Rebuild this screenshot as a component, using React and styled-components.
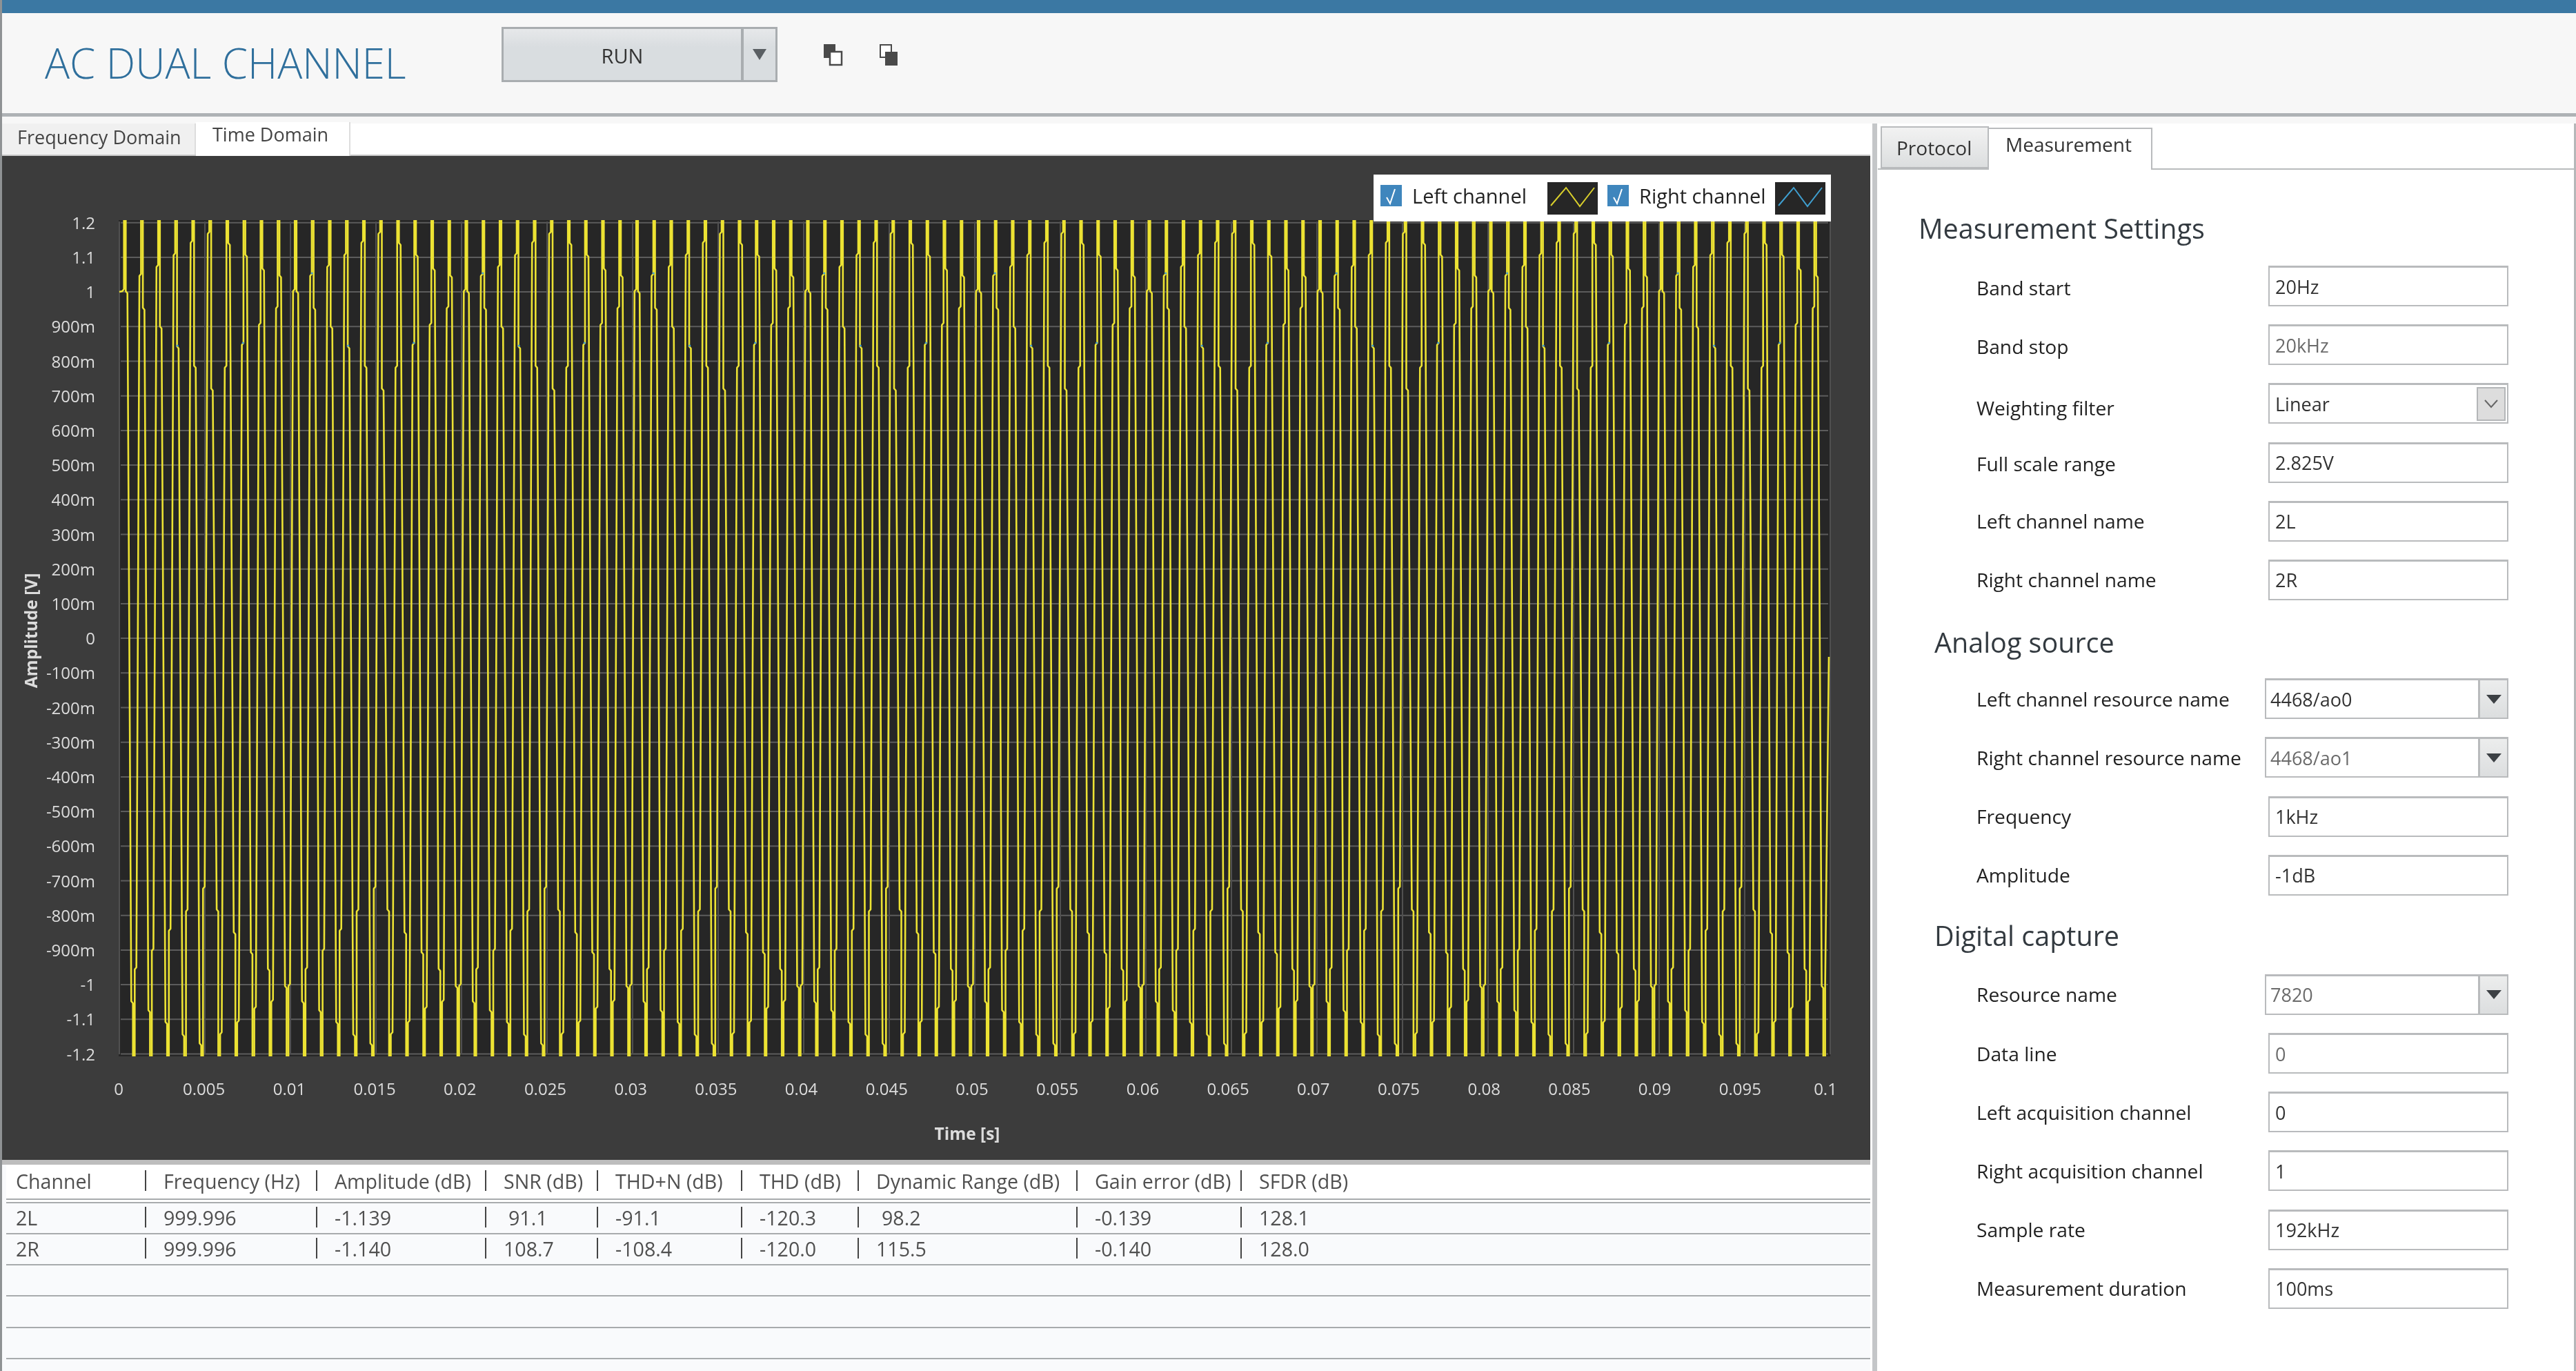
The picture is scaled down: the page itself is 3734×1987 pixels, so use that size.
import React from "react";
import styled, { createGlobalStyle } from "styled-components";

const FONT = `"Open Sans", "Noto Sans", "Liberation Sans", sans-serif`;

const GlobalStyle = createGlobalStyle`
  html, body {
    margin: 0;
    padding: 0;
    background: #ffffff;
  }
`;

const Page = styled.div`
  width: 3734px;
  height: 1987px;
  box-sizing: border-box;
  display: flex;
  flex-direction: column;
  overflow: hidden;
  border-left: 3px solid #8f9294;
  background: #ffffff;
  font-family: ${FONT};
  filter: blur(0.6px);
`;

const TopBar = styled.div`
  height: 19px;
  flex: none;
  background: #3b78a3;
`;

const Header = styled.div`
  height: 150px;
  flex: none;
  box-sizing: border-box;
  display: flex;
  align-items: flex-start;
  padding: 20px 0 0 62px;
  background: #f7f7f7;
  border-bottom: 5px solid #aeb2b5;
`;

const Title = styled.div`
  width: 662px;
  margin-top: 12px;
  font-size: 60px;
  line-height: 80px;
  font-weight: 300;
  color: #2f6f9c;
  white-space: nowrap;
`;

const RunButton = styled.div`
  width: 400px;
  height: 80px;
  box-sizing: border-box;
  display: flex;
  border: 3px solid #a9adb0;
  background: linear-gradient(#e6e8ea, #d9dde0 35%);
`;

const RunLabel = styled.div`
  width: 344px;
  display: flex;
  align-items: center;
  justify-content: center;
  padding-top: 2px;
  font-size: 29px;
  color: #333333;
  border-right: 4px solid #a9adb0;
`;

const RunArrow = styled.div`
  flex: 1;
  display: flex;
  justify-content: center;
  padding-top: 29px;
  &::before {
    content: "";
    height: 0;
    border-left: 10px solid transparent;
    border-right: 10px solid transparent;
    border-top: 16px solid #5a5f63;
  }
`;

const ToolIcon = styled.svg`
  width: 28px;
  height: 32px;
  margin-top: 25px;
  margin-left: ${(p) => p.$gap}px;
`;

const Spacer = styled.div`
  height: 10px;
  flex: none;
  background: #f7f7f7;
`;

const Main = styled.div`
  flex: 1;
  min-height: 0;
  display: flex;
`;

const LeftPane = styled.div`
  width: 2708px;
  flex: none;
  display: flex;
  flex-direction: column;
`;

const VSplit = styled.div`
  width: 11px;
  flex: none;
  background: linear-gradient(90deg, #ffffff 0, #ffffff 30%, #c4c6c8 30%, #c4c6c8 90%, #ffffff 90%);
`;

const LeftTabs = styled.div`
  height: 47px;
  flex: none;
  box-sizing: border-box;
  display: flex;
  border-bottom: 2px solid #c9c9c9;
`;

const LeftTab = styled.div`
  width: ${(p) => p.$w}px;
  box-sizing: border-box;
  font-size: 27px;
  color: #444444;
  white-space: nowrap;
  background: ${(p) => (p.$active ? "#ffffff" : "#f0f0f0")};
  padding: ${(p) => (p.$active ? "0 0 0 24px" : "2px 0 0 22px")};
  margin-top: ${(p) => (p.$active ? -2 : 0)}px;
  border-right: 2px solid #dddddd;
  margin-bottom: ${(p) => (p.$active ? "-2px" : "0")};
  line-height: 36px;
`;

const ChartArea = styled.div`
  position: relative;
  height: 1455px;
  flex: none;
  background: #3c3c3c;
`;

const ChartSvg = styled.svg`
  display: block;
  width: 2708px;
  height: 1455px;
`;

const AxisText = styled.text`
  font-family: ${FONT};
  font-size: 24px;
  fill: #dcdcdc;
  text-anchor: ${(p) => p.$anchor || "middle"};
`;

const AxisTitle = styled.text`
  font-family: ${FONT};
  font-size: 24.5px;
  font-weight: 700;
  fill: #dcdcdc;
  text-anchor: middle;
`;

const Legend = styled.div`
  position: absolute;
  left: 1988px;
  top: 27px;
  width: 663px;
  height: 68px;
  box-sizing: border-box;
  display: flex;
  align-items: center;
  padding: 0 0 7px 10px;
  background: #ffffff;
`;

const LegendCheck = styled.svg`
  width: 31px;
  height: 31px;
  flex: none;
  margin-right: 15px;
`;

const LegendName = styled.div`
  width: ${(p) => p.$w}px;
  font-size: 29px;
  color: #222222;
  white-space: nowrap;
`;

const LegendSwatch = styled.svg`
  width: 73px;
  height: 47px;
  flex: none;
  margin-right: ${(p) => p.$gap}px;
  margin-top: 8px;
`;

const HSplit = styled.div`
  height: 7px;
  flex: none;
  background: #bdbdbd;
`;

const TableWrap = styled.div`
  flex: 1;
  padding-left: 6px;
  background: #f9fafc;
`;

const ColumnGrid = styled.div`
  display: grid;
  grid-template-columns: 201px 248px 245px 162px 209px 169px 317px 238px 1fr;
  box-sizing: border-box;
  height: ${(p) => p.$h}px;
  background: ${(p) => p.$bg || "transparent"};
  border-bottom: ${(p) => (p.$double ? "7px double #a8abad" : "2px solid #a8abad")};
`;

const Cell = styled.div`
  display: flex;
  align-items: center;
  font-size: 28.6px;
  color: #505050;
  white-space: nowrap;
  padding-left: ${(p) => (p.$first ? 14 : 0)}px;
  padding-bottom: 3px;
`;

const CellBar = styled.span`
  width: 2px;
  height: 30px;
  flex: none;
  margin-right: ${(p) => 25 + (p.$indent || 0)}px;
  background: #444444;
`;

const RightPane = styled.div`
  flex: 1;
  min-width: 0;
  border-right: 3px solid #b5b7b9;
  background: #ffffff;
`;

const RightTabs = styled.div`
  height: 67px;
  box-sizing: border-box;
  display: flex;
  align-items: flex-end;
  padding-left: 4px;
  border-bottom: 2px solid #b9bbbd;
`;

const RightTab = styled.div`
  width: ${(p) => p.$w}px;
  height: 61px;
  box-sizing: border-box;
  font-size: 28px;
  color: #333333;
  border: 2px solid #b9bbbd;
  border-left-width: ${(p) => (p.$active ? 0 : 2)}px;
  border-bottom-width: ${(p) => (p.$active ? 0 : 2)}px;
  margin-bottom: ${(p) => (p.$active ? -2 : 0)}px;
  background: ${(p) => (p.$active ? "#ffffff" : "linear-gradient(#f2f2f2, #dcdedf)")};
  padding: ${(p) => (p.$active ? "4px 0 0 24px" : "11px 0 0 21px")};
  line-height: 36px;
`;

const SectionTitle = styled.div`
  height: 60px;
  line-height: 60px;
  font-size: 39.5px;
  font-weight: 400;
  color: #333a40;
  white-space: nowrap;
  padding-left: ${(p) => p.$indent}px;
  padding-top: ${(p) => p.$top}px;
  margin-bottom: ${(p) => p.$bottom}px;
`;

const Row = styled.div`
  height: 59px;
  display: flex;
  justify-content: space-between;
  align-items: center;
  padding: 0 95px 0 143px;
  margin-bottom: 26.2px;
`;

const Label = styled.div`
  font-size: 28.2px;
  color: #222222;
  white-space: nowrap;
  padding-top: ${(p) => p.$drop || 0}px;
`;

const Field = styled.div`
  width: ${(p) => (p.$wide ? 353 : 348)}px;
  height: 59px;
  box-sizing: border-box;
  display: flex;
  align-items: center;
  justify-content: space-between;
  padding-left: ${(p) => (p.$wide ? 6 : 8)}px;
  border: 2px solid #b9bbbd;
  border-top-width: 3px;
  background: #ffffff;
  font-size: 27px;
  color: ${(p) => (p.$muted ? "#6b6b6b" : "#333333")};
`;

const DropButton = styled.div`
  width: 42px;
  height: 100%;
  box-sizing: border-box;
  display: flex;
  align-items: center;
  justify-content: center;
  border-left: 3px solid #b9bbbd;
  background: linear-gradient(#eceded, #dcdedf);
  &::before {
    content: "";
    border-left: 11px solid transparent;
    border-right: 11px solid transparent;
    border-top: 13px solid #3c4044;
  }
`;

const ChevronButton = styled.div`
  width: 42px;
  height: 49px;
  box-sizing: border-box;
  margin-right: 2px;
  display: flex;
  align-items: center;
  justify-content: center;
  border: 2px solid #b4b6b8;
  background: #dddddd;
`;

const Y_LABELS = [
  "1.2", "1.1", "1", "900m", "800m", "700m", "600m", "500m", "400m", "300m", "200m", "100m", "0",
  "-100m", "-200m", "-300m", "-400m", "-500m", "-600m", "-700m", "-800m", "-900m", "-1", "-1.1", "-1.2",
];

const X_LABELS = [
  "0", "0.005", "0.01", "0.015", "0.02", "0.025", "0.03", "0.035", "0.04", "0.045", "0.05",
  "0.055", "0.06", "0.065", "0.07", "0.075", "0.08", "0.085", "0.09", "0.095", "0.1",
];

// shoulder heights of the sampled wave, repeating every ten periods
const HIGH = [419, 397, 384, 367, 349, 336, 352, 369, 389, 399];
const LOW = [422, 446, 473, 502, 530, 563, 530, 497, 468, 444];

const Y_TOP = 318;
const Y_BOT = 1532;
const MIRROR = 1851;

const shoulders = (p) => {
  // first half of the cycle has the early shoulder on the left
  return p < 6 ? { left: HIGH[p], right: LOW[p] } : { left: LOW[p], right: HIGH[p] };
};

const buildWave = () => {
  const pts = [[173, 423]];
  for (let i = 0; i < 100; i++) {
    const t = 181 + 24.75 * i;
    const b = 194 + 24.75 * i;
    const top = shoulders(i % 10);
    const bot = shoulders((i + 1) % 10);
    pts.push([t - 3.7, top.left + 3]);
    pts.push([t - 1.3, top.left]);
    pts.push([t - 1.3, Y_TOP]);
    pts.push([t + 1.3, Y_TOP]);
    pts.push([t + 1.3, top.right]);
    pts.push([t + 3.7, top.right + 3]);
    pts.push([b - 3.7, MIRROR - bot.left - 3]);
    pts.push([b - 1.3, MIRROR - bot.left]);
    pts.push([b - 1.3, Y_BOT]);
    pts.push([b + 1.3, Y_BOT]);
    pts.push([b + 1.3, MIRROR - bot.right]);
    if (i < 99) pts.push([b + 3.7, MIRROR - bot.right - 3]);
  }
  pts.push([2651, 952]);
  return pts.map(([x, y], i) => `${i ? "L" : "M"}${x.toFixed(1)} ${y}`).join("");
};

const WAVE = buildWave();

const DOTS = [];
for (let i = 0; i < 100; i++) {
  if (i % 10 === 3) DOTS.push([181 + 24.75 * i + 2, 501]);
  if (i % 10 === 7) DOTS.push([181 + 24.75 * i - 2, 497]);
  if (i % 10 === 1) DOTS.push([181 + 24.75 * (i + 10) - 1, 396]);
}

const COLUMNS = ["Channel", "Frequency (Hz)", "Amplitude (dB)", "SNR (dB)", "THD+N (dB)", "THD (dB)", "Dynamic Range (dB)", "Gain error (dB)", "SFDR (dB)"];

const ROWS = [
  [["2L"], ["999.996"], ["-1.139"], ["91.1", 7], ["-91.1"], ["-120.3"], ["98.2", 8], ["-0.139"], ["128.1"]],
  [["2R"], ["999.996"], ["-1.140"], ["108.7"], ["-108.4"], ["-120.0"], ["115.5"], ["-0.140"], ["128.0"]],
];

const MEASUREMENT = [
  { label: "Band start", value: "20Hz", drop: 4 },
  { label: "Band stop", value: "20kHz", muted: true, drop: 4 },
  { label: "Weighting filter", value: "Linear", chevron: true, drop: 12 },
  { label: "Full scale range", value: "2.825V", drop: 4 },
  { label: "Left channel name", value: "2L" },
  { label: "Right channel name", value: "2R" },
];

const ANALOG = [
  { label: "Left channel resource name", value: "4468/ao0", drop: true },
  { label: "Right channel resource name", value: "4468/ao1", muted: true, drop: true },
  { label: "Frequency", value: "1kHz" },
  { label: "Amplitude", value: "-1dB" },
];

const DIGITAL = [
  { label: "Resource name", value: "7820", muted: true, drop: true },
  { label: "Data line", value: "0", muted: true },
  { label: "Left acquisition channel", value: "0" },
  { label: "Right acquisition channel", value: "1" },
  { label: "Sample rate", value: "192kHz" },
  { label: "Measurement duration", value: "100ms" },
];

function FormRow({ item }) {
  return (
    <Row>
      <Label $drop={typeof item.drop === "number" ? item.drop : 0}>{item.label}</Label>
      <Field $wide={item.drop === true} $muted={item.muted}>
        {item.value}
        {item.drop === true && <DropButton />}
        {item.chevron && (
          <ChevronButton>
            <svg width="22" height="14" viewBox="0 0 22 14">
              <polyline points="2,2 11,12 20,2" fill="none" stroke="#666" strokeWidth="2" />
            </svg>
          </ChevronButton>
        )}
      </Field>
    </Row>
  );
}

function CheckMark() {
  return (
    <LegendCheck viewBox="0 0 31 31">
      <rect width="31" height="31" fill="#3f86bd" />
      <polyline points="9,18 14,27 21,6" fill="none" stroke="#ffffff" strokeWidth="2" />
    </LegendCheck>
  );
}

function Swatch({ color, gap }) {
  return (
    <LegendSwatch viewBox="0 0 73 47" $gap={gap}>
      <rect width="73" height="47" fill="#262626" />
      <polyline points="5,34 27,8 47,35 68,8" fill="none" stroke={color} strokeWidth="2" />
    </LegendSwatch>
  );
}

function Chart() {
  return (
    <ChartArea>
      <ChartSvg viewBox="3 226 2708 1455">
        <defs>
          <clipPath id="plot-clip">
            <rect x="172" y="319" width="2481" height="1212" />
          </clipPath>
        </defs>
        <rect x="172" y="319" width="2481" height="1212" fill="#262626" />
        {Y_LABELS.map((text, i) => {
          const y = 322.7 + i * 50.2;
          return (
            <g key={text}>
              <line x1="175" x2="2650" y1={y} y2={y} stroke="#5c5c5c" strokeWidth="2" />
              <AxisText x="138" y={y + 9} $anchor="end">{text}</AxisText>
            </g>
          );
        })}
        {X_LABELS.map((text, i) => {
          const x = 173 + i * 124;
          return (
            <g key={text}>
              <line x1={x} x2={x} y1="321" y2="1528" stroke="#505050" strokeWidth="2" />
              <AxisText x={172 + i * 123.7} y="1587">{text}</AxisText>
            </g>
          );
        })}
        <g clipPath="url(#plot-clip)">
          <path d={WAVE} fill="none" stroke="#ece233" strokeWidth="2.6" strokeLinejoin="round" />
          {DOTS.map(([x, y]) => (
            <circle key={`${x}-${y}`} cx={x} cy={y} r="1.6" fill="#3f9fd0" />
          ))}
        </g>
        <AxisTitle x="1402" y="1652">Time [s]</AxisTitle>
        <AxisTitle transform="translate(54 914) rotate(-90)">Amplitude [V]</AxisTitle>
      </ChartSvg>
      <Legend>
        <CheckMark />
        <LegendName $w={196}>Left channel</LegendName>
        <Swatch color="#d9cf2c" gap={14} />
        <CheckMark />
        <LegendName $w={197}>Right channel</LegendName>
        <Swatch color="#3f9fd0" gap={0} />
      </Legend>
    </ChartArea>
  );
}

function Results() {
  return (
    <TableWrap>
      <ColumnGrid $h={56} $bg="#ffffff" $double>
        {COLUMNS.map((name, i) => (
          <Cell key={name} $first={i === 0}>
            {i > 0 && <CellBar />}
            {name}
          </Cell>
        ))}
      </ColumnGrid>
      {ROWS.map((row) => (
        <ColumnGrid key={row[0][0]} $h={45}>
          {row.map(([value, indent], i) => (
            <Cell key={i} $first={i === 0}>
              {i > 0 && <CellBar $indent={indent} />}
              {value}
            </Cell>
          ))}
        </ColumnGrid>
      ))}
      <ColumnGrid $h={45} />
      <ColumnGrid $h={46} />
      <ColumnGrid $h={45} />
    </TableWrap>
  );
}

export default function App() {
  return (
    <>
      <GlobalStyle />
      <Page>
        <TopBar />
        <Header>
          <Title>AC DUAL CHANNEL</Title>
          <RunButton>
            <RunLabel>RUN</RunLabel>
            <RunArrow />
          </RunButton>
          <ToolIcon $gap={67} viewBox="0 0 28 32">
            <rect x="0" y="0" width="17" height="20" fill="#4a4a4a" />
            <rect x="9" y="11" width="17" height="19" fill="#ffffff" stroke="#4a4a4a" strokeWidth="2.5" />
          </ToolIcon>
          <ToolIcon $gap={53} viewBox="0 0 28 32">
            <rect x="1" y="1" width="16" height="18" fill="#ffffff" stroke="#4a4a4a" strokeWidth="2" />
            <rect x="8" y="11" width="18" height="20" fill="#4a4a4a" />
          </ToolIcon>
        </Header>
        <Spacer />
        <Main>
          <LeftPane>
            <LeftTabs>
              <LeftTab $w={281}>Frequency Domain</LeftTab>
              <LeftTab $w={224} $active>Time Domain</LeftTab>
            </LeftTabs>
            <Chart />
            <HSplit />
            <Results />
          </LeftPane>
          <VSplit />
          <RightPane>
            <RightTabs>
              <RightTab $w={157}>Protocol</RightTab>
              <RightTab $w={237} $active>Measurement</RightTab>
            </RightTabs>
            <SectionTitle $indent={59} $top={55} $bottom={24}>Measurement Settings</SectionTitle>
            {MEASUREMENT.map((item) => (
              <FormRow key={item.label} item={item} />
            ))}
            <SectionTitle $indent={82} $top={5} $bottom={22}>Analog source</SectionTitle>
            {ANALOG.map((item) => (
              <FormRow key={item.label} item={item} />
            ))}
            <SectionTitle $indent={82} $top={2} $bottom={26}>Digital capture</SectionTitle>
            {DIGITAL.map((item) => (
              <FormRow key={item.label} item={item} />
            ))}
          </RightPane>
        </Main>
      </Page>
    </>
  );
}
